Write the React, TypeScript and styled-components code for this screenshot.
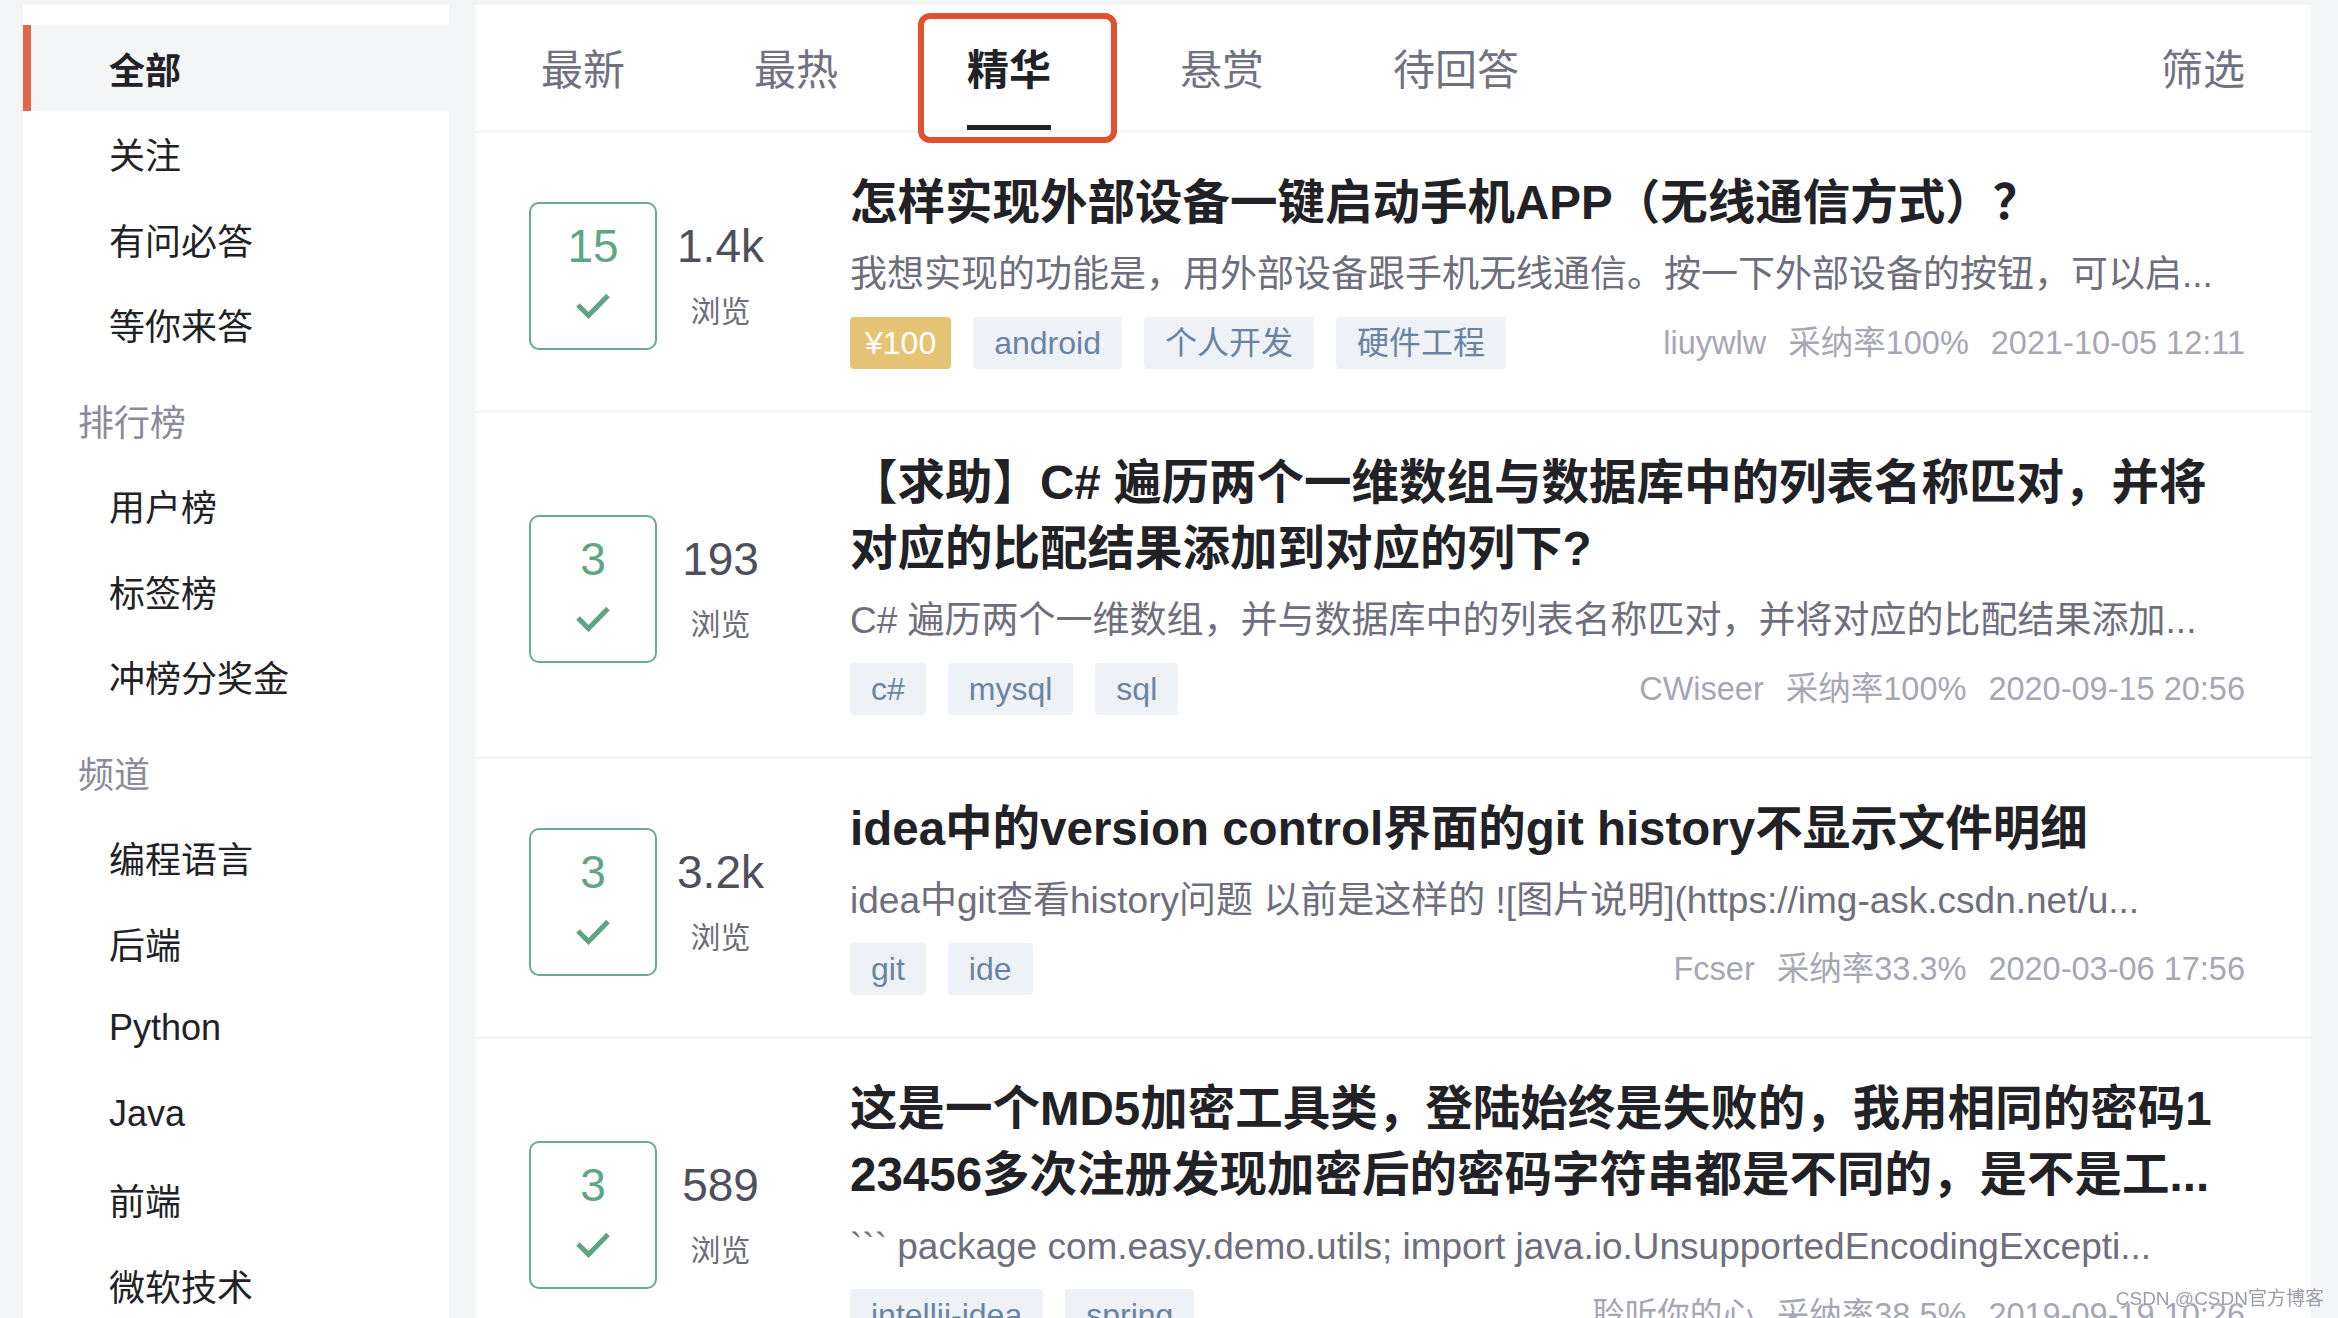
import React from 'react'
import styled, { createGlobalStyle, css } from 'styled-components'

const GlobalStyle = createGlobalStyle`
  html, body {
    margin: 0;
    padding: 0;
    background-color: #f4f5f7;
    font-family: 'Liberation Sans', 'Noto Sans CJK SC', sans-serif;
  }
  * {
    box-sizing: border-box;
  }
`

const Page = styled.div`
  display: flex;
  gap: 26px;
  height: 1318px;
  padding: 5px 27px 0 23px;
  overflow: hidden;
`

const Sidebar = styled.nav`
  flex-shrink: 0;
  width: 426px;
  padding-top: 20px;
  background-color: #fff;
`

const NavItem = styled.div<{ $active?: boolean }>`
  display: flex;
  align-items: center;
  height: 85.5px;
  padding-left: 86px;
  font-size: 36px;
  color: #222226;
  ${(p) =>
    p.$active &&
    css`
      background-color: #f4f5f7;
      box-shadow: inset 8px 0 0 #e0684a;
      font-weight: 700;
    `}
`

const NavLabel = styled.div`
  display: flex;
  align-items: center;
  height: 85.5px;
  margin-top: 10px;
  padding-left: 55px;
  font-size: 36px;
  color: #8b8b99;
`

const Main = styled.main`
  flex: 1;
  display: flex;
  flex-direction: column;
  gap: 3px;
  min-width: 0;
`

const TabBar = styled.div`
  display: flex;
  align-items: flex-start;
  height: 125px;
  padding: 0 66px;
  background-color: #fff;
`

const Tab = styled.div<{ $active?: boolean }>`
  position: relative;
  margin-right: 129px;
  padding: 45px 0 33px;
  font-size: 42px;
  line-height: 42px;
  color: #717182;
  border-bottom: 5px solid transparent;
  ${(p) =>
    p.$active &&
    css`
      color: #222226;
      font-weight: 700;
      border-bottom-color: #222226;
    `}
`

const FilterTab = styled(Tab)`
  margin-left: auto;
  margin-right: 0;
`

const Highlight = styled.span`
  position: absolute;
  left: -49px;
  top: 8px;
  width: 199px;
  height: 130px;
  border: 6px solid #e0512f;
  border-radius: 12px;
  z-index: 2;
  pointer-events: none;
`

const Card = styled.article`
  display: flex;
  align-items: center;
  padding: 37px 66px 41px 54px;
  background-color: #fff;
`

const Stats = styled.div`
  display: flex;
  flex-shrink: 0;
  margin: 12px 66px 0 0;
`

const AnswerBox = styled.div`
  display: flex;
  flex-direction: column;
  align-items: center;
  width: 128px;
  height: 148px;
  padding-top: 19px;
  border: 2px solid #6aab8c;
  border-radius: 10px;
  color: #5da683;
`

const BigNumber = styled.div`
  font-size: 46px;
  line-height: 46px;
`

const Check = styled.svg`
  margin-top: 23px;
`

const Views = styled.div`
  display: flex;
  flex-direction: column;
  align-items: center;
  width: 127px;
  padding-top: 21px;
  color: #4f4f5c;
`

const ViewsLabel = styled.div`
  margin-top: 28px;
  font-size: 30px;
  line-height: 30px;
  color: #6d6d7a;
`

const Content = styled.div`
  flex: 1;
  min-width: 0;
`

const Title = styled.h2`
  max-width: 1375px;
  margin: 0;
  font-size: 47.5px;
  line-height: 66px;
  font-weight: 700;
  color: #222226;
  word-break: break-all;
  display: -webkit-box;
  -webkit-line-clamp: 2;
  -webkit-box-orient: vertical;
  overflow: hidden;
`

const Desc = styled.p`
  margin: 14px 0 0;
  font-size: 37px;
  line-height: 50px;
  color: #6e6e7c;
  white-space: nowrap;
  overflow: hidden;
  text-overflow: ellipsis;
`

const Footer = styled.div`
  display: flex;
  align-items: center;
  margin-top: 17px;
  height: 52px;
`

const Tags = styled.div`
  display: flex;
  gap: 22px;
`

const Tag = styled.span<{ $reward?: boolean }>`
  height: 52px;
  padding: 0 ${(p) => (p.$reward ? 15 : 21)}px;
  border-radius: 4px;
  font-size: 32px;
  line-height: 52px;
  white-space: nowrap;
  background-color: ${(p) => (p.$reward ? '#e5c476' : '#eef2f6')};
  color: ${(p) => (p.$reward ? '#fff' : '#6884a2')};
`

const Meta = styled.div`
  display: flex;
  align-items: baseline;
  gap: 22px;
  margin-left: auto;
  font-size: 32.5px;
  line-height: 40px;
  color: #a7a7b4;
  white-space: nowrap;
`

const Watermark = styled.div`
  position: fixed;
  right: 14px;
  bottom: 8px;
  font-size: 19px;
  color: #9c9ca8;
  text-shadow: 0 0 2px #fff, 0 0 2px #fff;
  z-index: 3;
`

const navTop = ['全部', '关注', '有问必答', '等你来答']
const navRank = ['用户榜', '标签榜', '冲榜分奖金']
const navChannel = ['编程语言', '后端', 'Python', 'Java', '前端', '微软技术']

const tabs = ['最新', '最热', '精华', '悬赏', '待回答']

type Question = {
  answers: number
  views: string
  title: string
  desc: string
  reward?: string
  tags: string[]
  author: string
  rate: string
  time: string
}

const questions: Question[] = [
  {
    answers: 15,
    views: '1.4k',
    title: '怎样实现外部设备一键启动手机APP（无线通信方式）？',
    desc: '我想实现的功能是，用外部设备跟手机无线通信。按一下外部设备的按钮，可以启...',
    reward: '¥100',
    tags: ['android', '个人开发', '硬件工程'],
    author: 'liuywlw',
    rate: '100%',
    time: '2021-10-05 12:11',
  },
  {
    answers: 3,
    views: '193',
    title: '【求助】C# 遍历两个一维数组与数据库中的列表名称匹对，并将对应的比配结果添加到对应的列下?',
    desc: 'C# 遍历两个一维数组，并与数据库中的列表名称匹对，并将对应的比配结果添加...',
    tags: ['c#', 'mysql', 'sql'],
    author: 'CWiseer',
    rate: '100%',
    time: '2020-09-15 20:56',
  },
  {
    answers: 3,
    views: '3.2k',
    title: 'idea中的version control界面的git history不显示文件明细',
    desc: 'idea中git查看history问题 以前是这样的 ![图片说明](https://img-ask.csdn.net/u...',
    tags: ['git', 'ide'],
    author: 'Fcser',
    rate: '33.3%',
    time: '2020-03-06 17:56',
  },
  {
    answers: 3,
    views: '589',
    title: '这是一个MD5加密工具类，登陆始终是失败的，我用相同的密码123456多次注册发现加密后的密码字符串都是不同的，是不是工...',
    desc: '``` package com.easy.demo.utils; import java.io.UnsupportedEncodingExcepti...',
    tags: ['intellij-idea', 'spring'],
    author: '聆听你的心',
    rate: '38.5%',
    time: '2019-09-19 10:26',
  },
]

const QuestionCard = ({ q }: { q: Question }) => (
  <Card>
    <Stats>
      <AnswerBox>
        <BigNumber>{q.answers}</BigNumber>
        <Check width="36" height="27" viewBox="0 0 36 27">
          <path d="M3 13 L13.5 23.5 L33 3.5" fill="none" stroke="#5da683" strokeWidth="5" />
        </Check>
      </AnswerBox>
      <Views>
        <BigNumber>{q.views}</BigNumber>
        <ViewsLabel>浏览</ViewsLabel>
      </Views>
    </Stats>
    <Content>
      <Title>{q.title}</Title>
      <Desc>{q.desc}</Desc>
      <Footer>
        <Tags>
          {q.reward && <Tag $reward>{q.reward}</Tag>}
          {q.tags.map((t) => (
            <Tag key={t}>{t}</Tag>
          ))}
        </Tags>
        <Meta>
          <span>{q.author}</span>
          <span>采纳率{q.rate}</span>
          <span>{q.time}</span>
        </Meta>
      </Footer>
    </Content>
  </Card>
)

const App = () => {
  return (
    <>
      <GlobalStyle />
      <Page>
        <Sidebar>
          {navTop.map((item, i) => (
            <NavItem key={item} $active={i === 0}>
              {item}
            </NavItem>
          ))}
          <NavLabel>排行榜</NavLabel>
          {navRank.map((item) => (
            <NavItem key={item}>{item}</NavItem>
          ))}
          <NavLabel>频道</NavLabel>
          {navChannel.map((item) => (
            <NavItem key={item}>{item}</NavItem>
          ))}
        </Sidebar>
        <Main>
          <TabBar>
            {tabs.map((tab) => (
              <Tab key={tab} $active={tab === '精华'}>
                {tab}
                {tab === '精华' && <Highlight />}
              </Tab>
            ))}
            <FilterTab>筛选</FilterTab>
          </TabBar>
          {questions.map((q, i) => (
            <QuestionCard key={i} q={q} />
          ))}
        </Main>
      </Page>
      <Watermark>CSDN @CSDN官方博客</Watermark>
    </>
  )
}

export default App
